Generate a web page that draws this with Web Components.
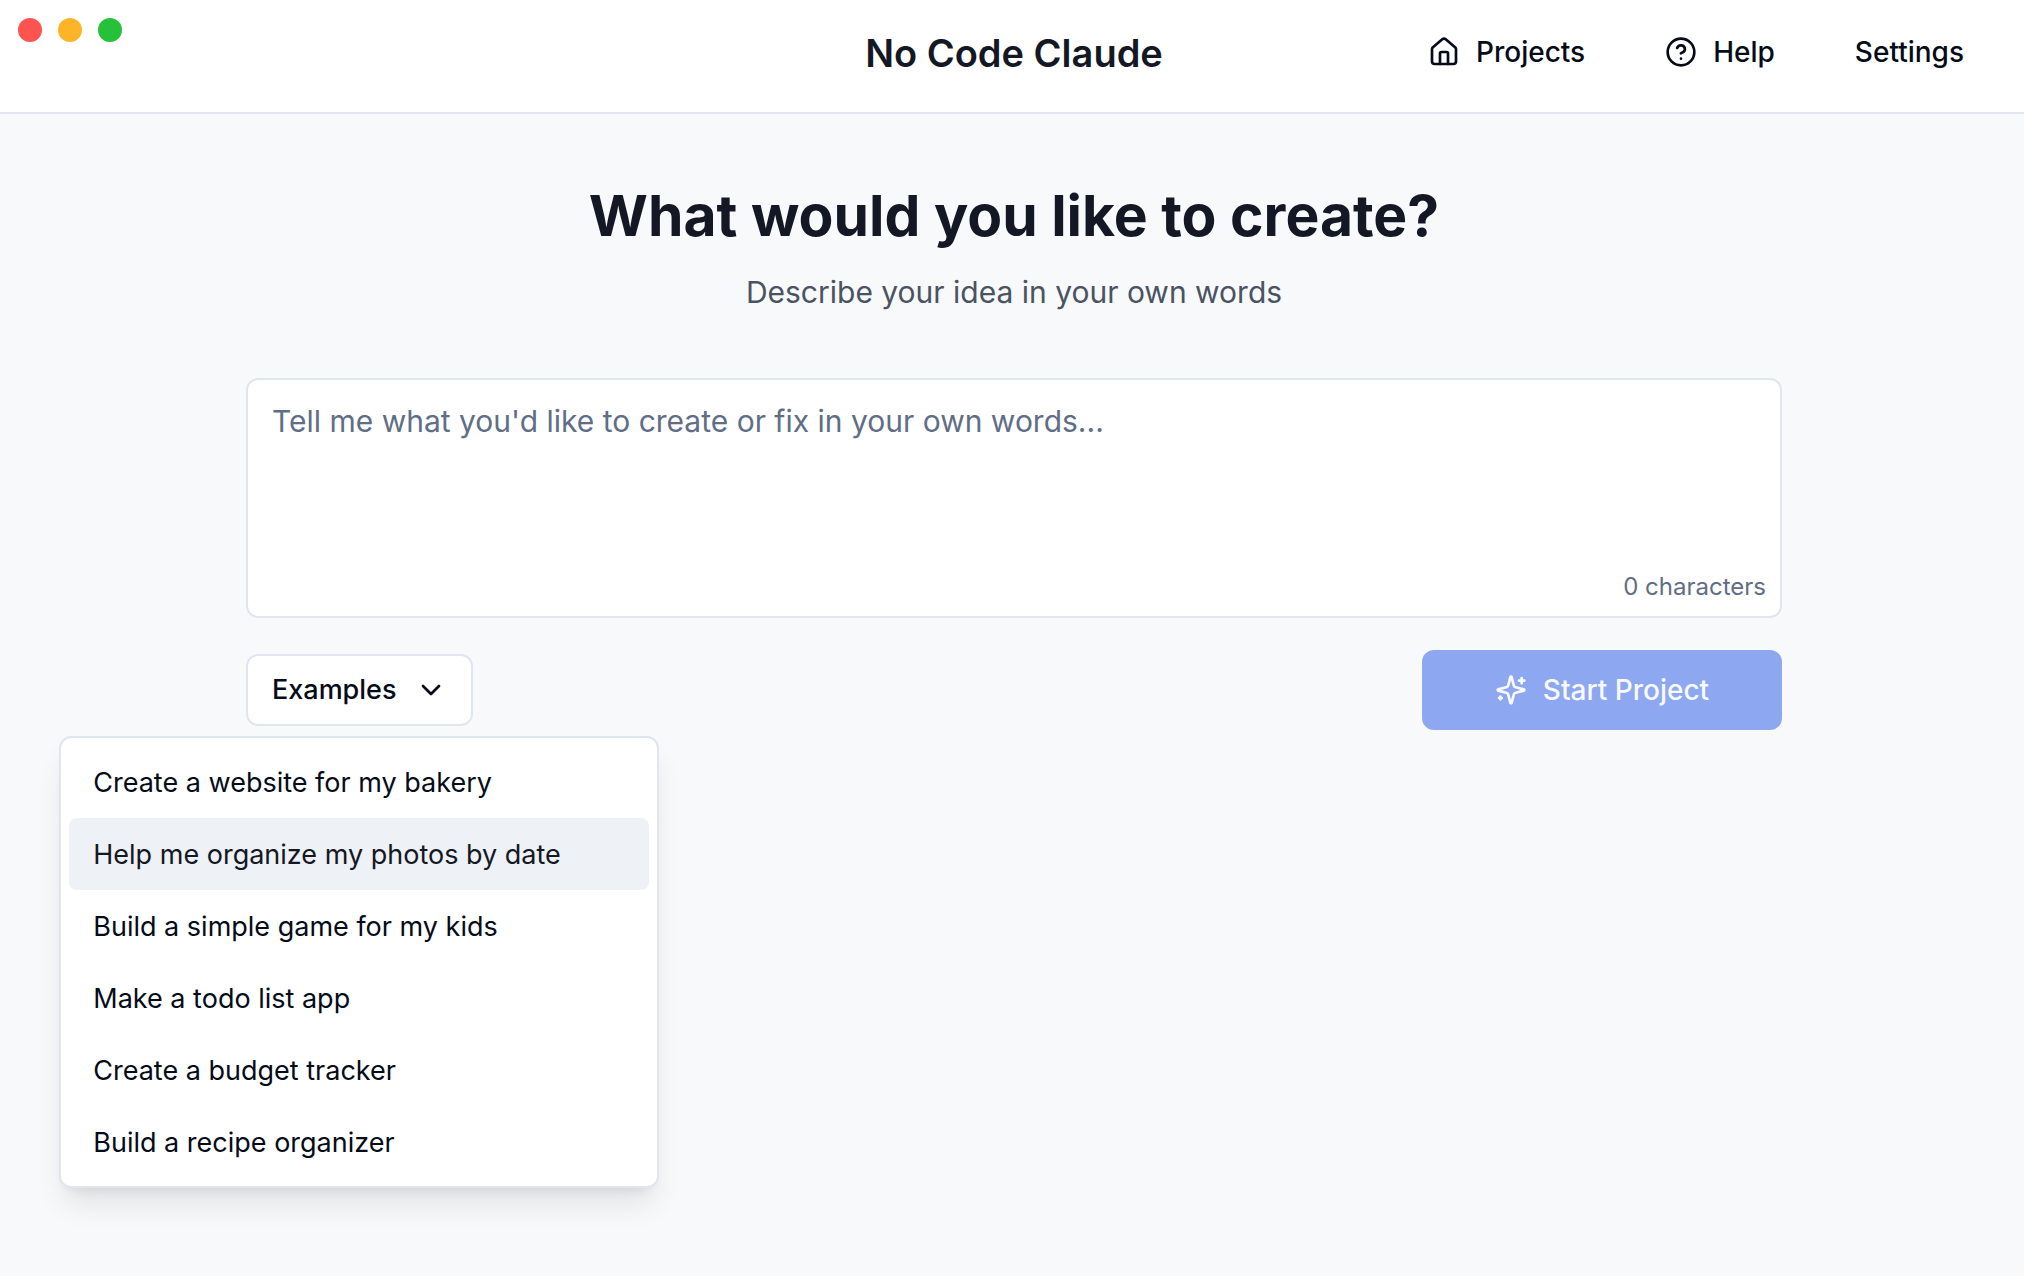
<!DOCTYPE html>
<html lang="en">
<head>
<meta charset="utf-8">
<meta name="viewport" content="width=device-width, initial-scale=1">
<title>No Code Claude</title>
<style>
  :root {
    --page: #f8f9fb;
    --surface: #ffffff;
    --line: #dfe6ef;
    --ink: #050b18;
    --heading: #131824;
    --body: #4a5362;
    --muted: #5f6e86;
    --accent: #eef1f6;
    --primary: #8da7f1;
  }
  html { height: 100%; background: var(--page); }
  body { margin: 0; min-height: 100%; background: var(--page); color: var(--ink);
    font: 400 28px/40px Inter, "Liberation Sans", sans-serif; }
</style>
</head>
<body>
<create-app></create-app>

<script>
const icons = {
  home: '<path d="M15 21v-8a1 1 0 0 0-1-1h-4a1 1 0 0 0-1 1v8"/><path d="M3 10a2 2 0 0 1 .709-1.528l7-5.999a2 2 0 0 1 2.582 0l7 5.999A2 2 0 0 1 21 10v9a2 2 0 0 1-2 2H5a2 2 0 0 1-2-2z"/>',
  help: '<circle cx="12" cy="12" r="10"/><path d="M9.09 9a3 3 0 0 1 5.83 1c0 2-3 3-3 3"/><path d="M12 17h.01"/>',
  chevron: '<path d="m6 9 6 6 6-6"/>',
  sparkles: '<path d="M9.937 15.5A2 2 0 0 0 8.5 14.063l-6.135-1.582a.5.5 0 0 1 0-.962L8.5 9.936A2 2 0 0 0 9.937 8.5l1.582-6.135a.5.5 0 0 1 .963 0L14.063 8.5A2 2 0 0 0 15.5 9.937l6.135 1.581a.5.5 0 0 1 0 .964L15.5 14.063a2 2 0 0 0-1.437 1.437l-1.582 6.135a.5.5 0 0 1-.963 0z"/><path d="M20 3v4"/><path d="M22 5h-4"/><path d="M4 17v2"/><path d="M5 18H3"/>'
};

function define(name, render, ready) {
  customElements.define(name, class extends HTMLElement {
    constructor() { super(); this.attachShadow({ mode: 'open' }); }
    connectedCallback() {
      this.shadowRoot.innerHTML = render(this);
      if (ready) ready(this, this.shadowRoot);
    }
  });
}

define('ui-icon', el => `
  <style>
    :host { display: block; flex: none; width: 32px; height: 32px; }
    svg { display: block; width: 100%; height: 100%; fill: none; stroke: currentColor;
      stroke-width: 2; stroke-linecap: round; stroke-linejoin: round; }
  </style>
  <svg viewBox="0 0 24 24" aria-hidden="true">${icons[el.getAttribute('name')]}</svg>`);

define('window-controls', () => `
  <style>
    :host { display: flex; gap: 16px; }
    i { width: 24px; height: 24px; border-radius: 50%; background: #ff534f; }
    i:nth-of-type(2) { background: #feb429; }
    i:nth-of-type(3) { background: #25c138; }
  </style><i></i><i></i><i></i>`);

define('nav-link', el => `
  <style>
    :host { display: block; }
    a { display: flex; align-items: center; gap: 16px; padding: 12px 24px;
      color: var(--ink); font-size: 28px; font-weight: 500; line-height: 40px; text-decoration: none; }
  </style>
  <a href="#">${el.hasAttribute('icon') ? `<ui-icon name="${el.getAttribute('icon')}"></ui-icon>` : ''}<slot></slot></a>`);

define('app-header', () => `
  <style>
    :host { display: block; }
    header { display: grid; grid-template-columns: 1fr auto 1fr; align-items: start; padding-left: 4px;
      background: var(--surface); border-bottom: 2px solid var(--line); }
    window-controls { padding: 18px 14px; }
    h1 { margin: 0; padding: 25px 0 31px; font-size: 38px; line-height: 56px; font-weight: 600; color: var(--heading); }
    nav { display: flex; justify-content: flex-end; gap: 32px; padding: 20px 36px 0 0; }
  </style>
  <header>
    <window-controls></window-controls>
    <h1>No Code Claude</h1>
    <nav>
      <nav-link icon="home">Projects</nav-link>
      <nav-link icon="help">Help</nav-link>
      <nav-link>Settings</nav-link>
    </nav>
  </header>`);

define('idea-field', () => `
  <style>
    :host { display: block; position: relative; }
    textarea { display: block; box-sizing: border-box; width: 100%; height: 240px; margin: 0; padding: 20px 24px;
      border: 2px solid var(--line); border-radius: 12px; background: var(--surface); color: var(--ink);
      font: inherit; font-size: 30px; line-height: 42px; resize: none; outline: none; }
    textarea::placeholder { color: var(--muted); opacity: 1; }
    output { position: absolute; right: 16px; bottom: 15px; font-size: 24px; line-height: 32px; color: var(--muted); }
  </style>
  <textarea id="idea" aria-label="Your idea" placeholder="Tell me what you'd like to create or fix in your own words..."></textarea>
  <output for="idea">0 characters</output>`,
  (el, root) => {
    const box = root.querySelector('textarea');
    box.addEventListener('input', () => {
      root.querySelector('output').textContent = box.value.length + ' characters';
    });
  });

define('menu-option', () => `
  <style>
    :host { display: block; }
    button { display: block; width: 100%; padding: 17px 24px 15px; border: 0; border-radius: 8px; background: none;
      color: var(--ink); font: inherit; font-size: 27px; line-height: 40px; text-align: left; }
    :host([active]) button { background: var(--accent); color: var(--heading); }
  </style>
  <button type="button" role="menuitem"><slot></slot></button>`);

define('examples-menu', () => `
  <style>
    :host { display: block; position: relative; }
    .trigger { display: flex; align-items: center; gap: 18px; padding: 14px 24px; border: 2px solid var(--line);
      border-radius: 12px; background: var(--surface); color: var(--ink);
      font: inherit; font-size: 27px; font-weight: 500; line-height: 40px; }
    .menu { position: absolute; top: calc(100% + 10px); left: 50%; transform: translateX(-50%);
      box-sizing: border-box; width: 600px; padding: 8px; border: 2px solid var(--line); border-radius: 12px;
      background: var(--surface);
      box-shadow: 0 20px 30px -6px rgb(0 0 0 / .1), 0 8px 12px -8px rgb(0 0 0 / .1); }
  </style>
  <button class="trigger" type="button" aria-haspopup="menu" aria-expanded="true">Examples<ui-icon name="chevron"></ui-icon></button>
  <div class="menu" role="menu"><slot></slot></div>`);

define('start-button', () => `
  <style>
    :host { display: block; }
    button { display: flex; align-items: center; justify-content: center; gap: 16px; min-width: 360px; padding: 20px 24px;
      border: 0; border-radius: 12px; background: var(--primary); color: var(--page);
      font: inherit; font-size: 28px; font-weight: 500; line-height: 40px; }
  </style>
  <button type="button" disabled><ui-icon name="sparkles"></ui-icon><slot></slot></button>`);

define('create-app', () => `
  <style>
    :host { display: block; }
    main { padding: 64px 36px 64px 40px; }
    section { max-width: 1536px; margin: 0 auto; }
    h2 { margin: 0; font-size: 57px; line-height: 76px; font-weight: 700; text-align: center; color: var(--heading); }
    p { margin: 16px 0 64px; font-size: 30px; line-height: 44px; text-align: center; color: var(--body); }
    .actions { display: flex; align-items: center; justify-content: space-between; margin-top: 32px; }
  </style>
  <app-header></app-header>
  <main><section>
    <h2>What would you like to create?</h2>
    <p>Describe your idea in your own words</p>
    <idea-field></idea-field>
    <div class="actions">
      <examples-menu>
        <menu-option>Create a website for my bakery</menu-option>
        <menu-option active>Help me organize my photos by date</menu-option>
        <menu-option>Build a simple game for my kids</menu-option>
        <menu-option>Make a todo list app</menu-option>
        <menu-option>Create a budget tracker</menu-option>
        <menu-option>Build a recipe organizer</menu-option>
      </examples-menu>
      <start-button>Start Project</start-button>
    </div>
  </section></main>`);
</script>
</body>
</html>
